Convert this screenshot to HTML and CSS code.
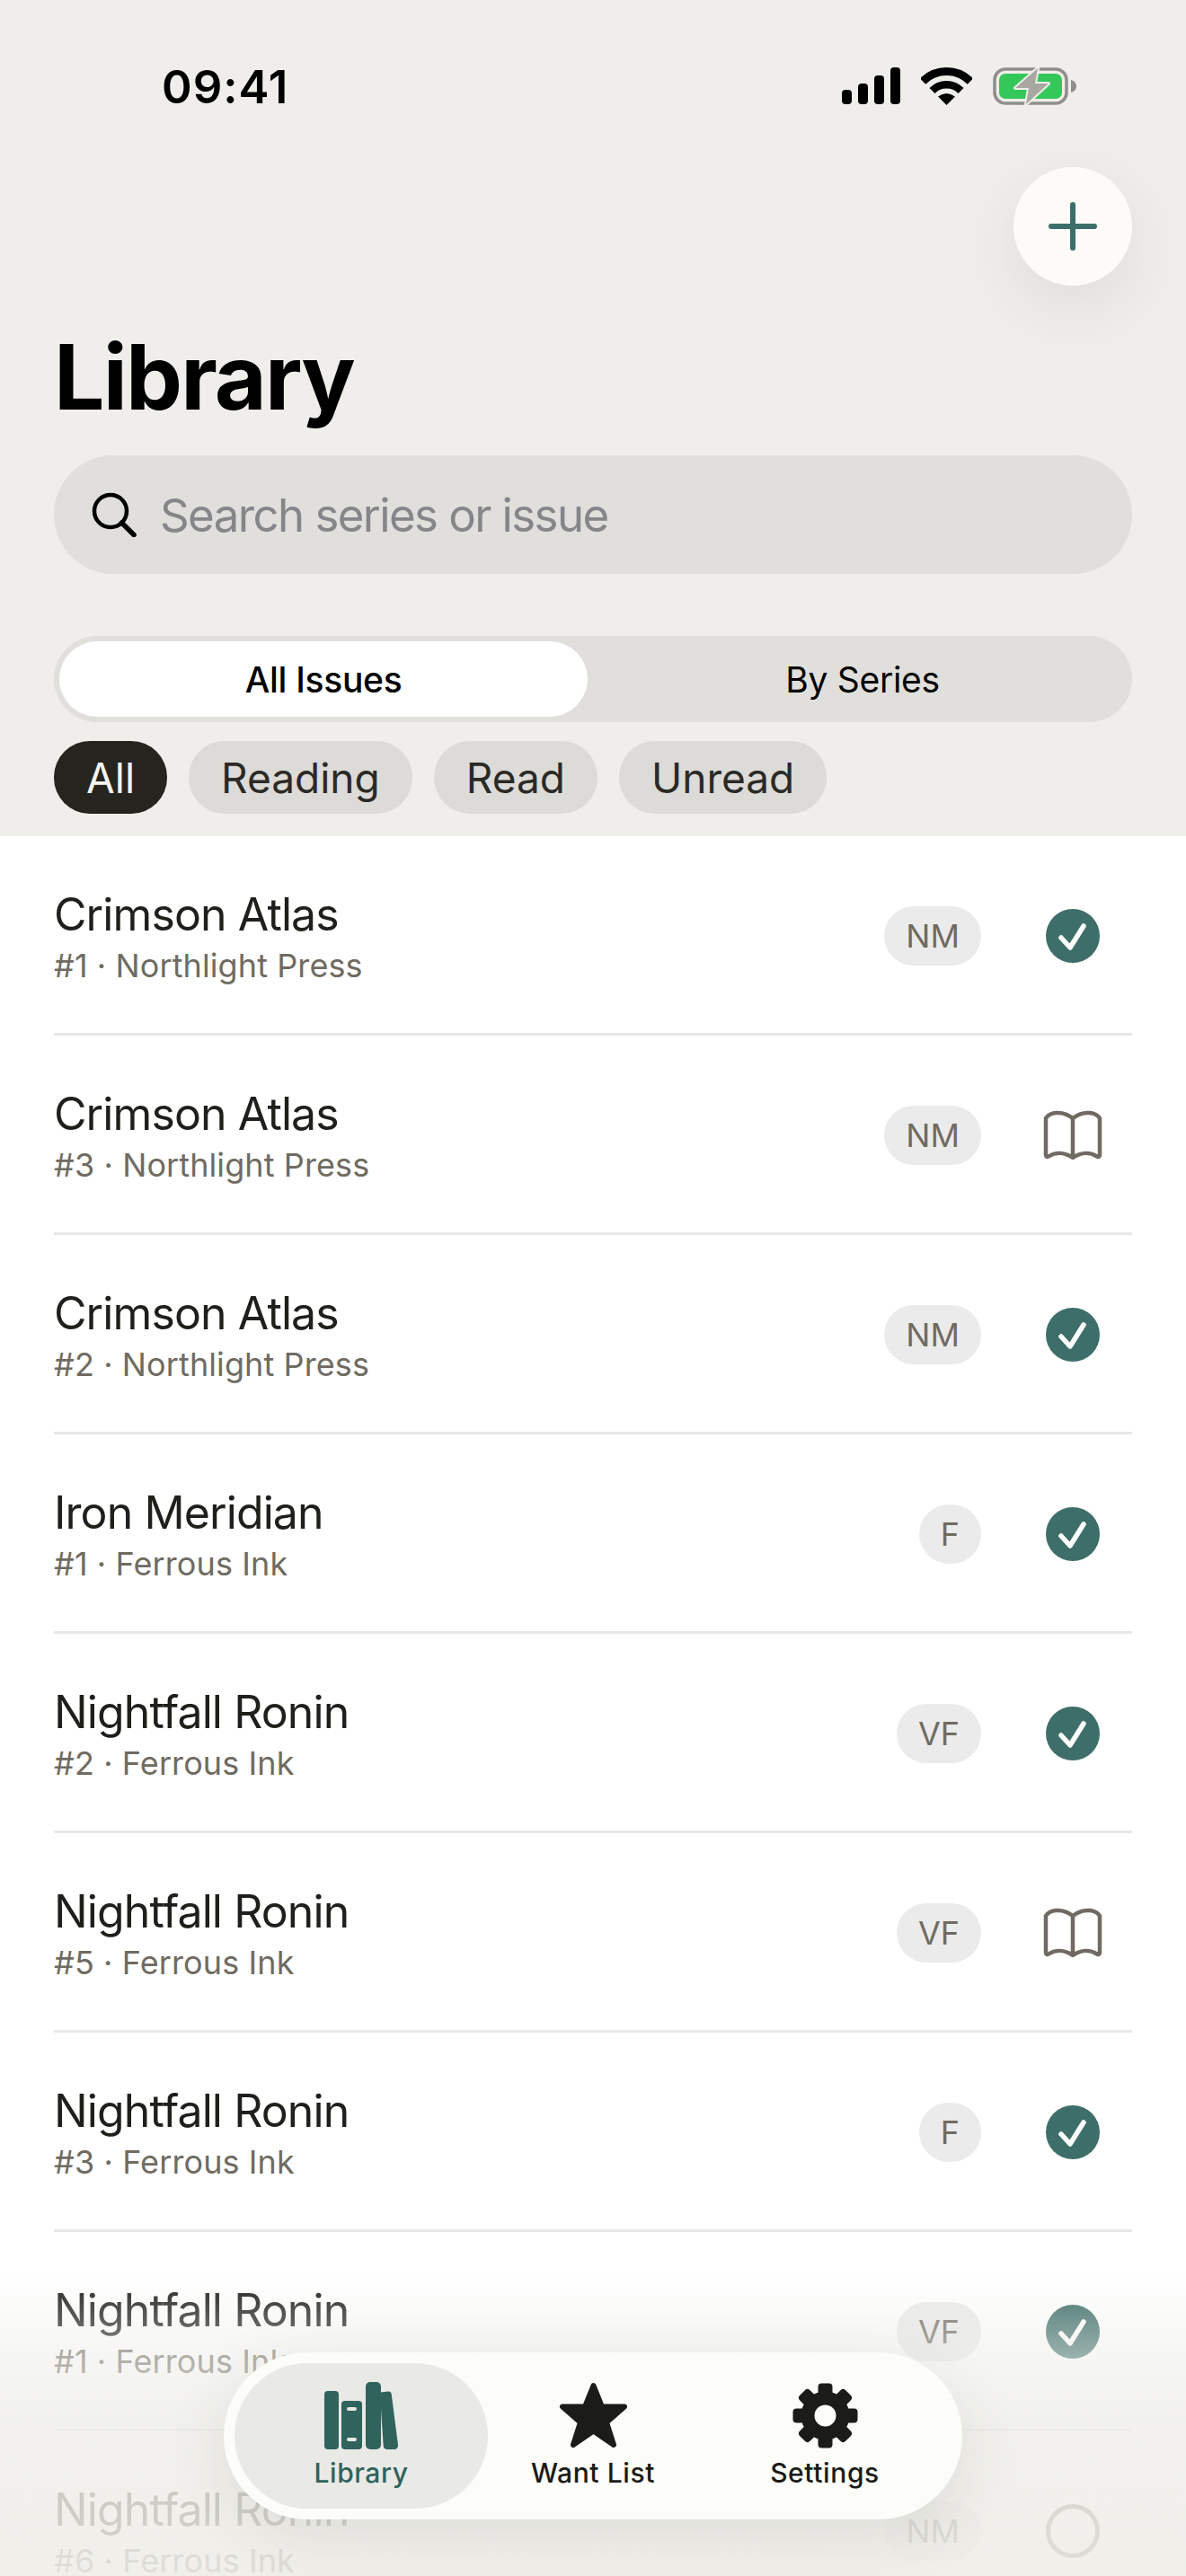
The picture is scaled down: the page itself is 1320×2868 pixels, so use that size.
FILE: index.html
```html
<!DOCTYPE html>
<html lang="en">
<head>
    <meta charset="UTF-8">
    <meta name="viewport" content="width=device-width, initial-scale=1.0">
    <title>Library</title>
    <link rel="stylesheet" href="styles.css">
</head>
<body>

<svg class="defs" width="0" height="0">
    <symbol id="icon-check" viewBox="0 0 60 60">
        <circle cx="30" cy="30" r="30" fill="#3d6e6a"/>
        <path d="M17 32 L27 43 L42 19" fill="none" stroke="#fff" stroke-width="5.5" stroke-linecap="round" stroke-linejoin="round"/>
    </symbol>
    <symbol id="icon-book" viewBox="0 0 66 56">
        <path d="M33 9 C27 4 20 2.5 14 3 C9 3.5 5 6 3 9 V50 C3 52 4.500 52.500 6 51.500 C13 47 23 46 33 53 C43 46 53 47 60 51.500 C61.500 52.500 63 52 63 50 V9 C61 6 57 3.500 52 3 C46 2.500 39 4 33 9 Z M33 9 V52" fill="none" stroke="#6f6b62" stroke-width="4.500" stroke-linejoin="round"/>
    </symbol>
    <symbol id="icon-empty" viewBox="0 0 60 60">
        <circle cx="30" cy="30" r="27.500" fill="none" stroke="#6f6b62" stroke-width="5"/>
    </symbol>
</svg>

<div class="screen">
    <div class="header">
        <div class="status-bar">
            <span class="time">09:41</span>
            <div class="status-icons">
                <svg width="65" height="42" viewBox="0 0 65 42">
                    <rect x="0" y="25" width="11" height="16" rx="4"/>
                    <rect x="18" y="18" width="11" height="23" rx="4"/>
                    <rect x="36" y="9" width="11" height="32" rx="4"/>
                    <rect x="54" y="0" width="11" height="41" rx="4"/>
                </svg>
                <svg width="57" height="42" viewBox="0 0 57 42">
                    <path d="M2 15.500 A37.500 37.500 0 0 1 55 15.500" fill="none" stroke="#000" stroke-width="9"/>
                    <path d="M12.500 26 A22.500 22.500 0 0 1 44.500 26" fill="none" stroke="#000" stroke-width="8.500"/>
                    <path d="M28.500 42 L19 32.500 Q28.500 25.500 38 32.500 Z"/>
                </svg>
                <svg width="93" height="42" viewBox="0 0 93 42">
                    <rect x="2" y="2" width="80" height="38" rx="12" fill="none" stroke="#8f8e8a" stroke-width="3.500"/>
                    <rect x="7" y="7" width="70" height="28" rx="7" fill="#34c759"/>
                    <path d="M87 14 C91 15 93 18 93 21 C93 24 91 27 87 28 Z" fill="#8f8e8a"/>
                    <path d="M50 1 L25 23 L40 23 L37 41 L62 18 L47 18 Z" fill="#a8a7a2" stroke="#efeeea" stroke-width="4" stroke-linejoin="round" paint-order="stroke"/>
                </svg>
            </div>
        </div>

        <div class="fab-row">
            <button class="fab">
                <svg width="54" height="54" viewBox="0 0 54 54">
                    <path d="M27 3 V51 M3 27 H51" fill="none" stroke="#3d6e6a" stroke-width="6" stroke-linecap="round"/>
                </svg>
            </button>
        </div>

        <h1 class="page-title">Library</h1>

        <div class="search">
            <svg width="50" height="50" viewBox="0 0 50 50">
                <circle cx="21" cy="21" r="18" fill="none" stroke="#000" stroke-width="4.500"/>
                <path d="M33.500 34 L47 47.500" fill="none" stroke="#000" stroke-width="5.500" stroke-linecap="round"/>
            </svg>
            <span>Search series or issue</span>
        </div>

        <div class="segments">
            <div class="segment selected">All Issues</div>
            <div class="segment">By Series</div>
        </div>

        <div class="chips">
            <div class="chip active">All</div>
            <div class="chip">Reading</div>
            <div class="chip">Read</div>
            <div class="chip">Unread</div>
        </div>
    </div>

    <div class="list">
        <div class="row">
            <div class="row-text"><div class="row-title">Crimson Atlas</div><div class="row-sub">#1 · Northlight Press</div></div>
            <span class="badge">NM</span>
            <span class="status"><svg class="ico-check"><use href="#icon-check"/></svg></span>
        </div>
        <div class="row">
            <div class="row-text"><div class="row-title">Crimson Atlas</div><div class="row-sub">#3 · Northlight Press</div></div>
            <span class="badge">NM</span>
            <span class="status"><svg class="ico-book"><use href="#icon-book"/></svg></span>
        </div>
        <div class="row">
            <div class="row-text"><div class="row-title">Crimson Atlas</div><div class="row-sub">#2 · Northlight Press</div></div>
            <span class="badge">NM</span>
            <span class="status"><svg class="ico-check"><use href="#icon-check"/></svg></span>
        </div>
        <div class="row">
            <div class="row-text"><div class="row-title">Iron Meridian</div><div class="row-sub">#1 · Ferrous Ink</div></div>
            <span class="badge">F</span>
            <span class="status"><svg class="ico-check"><use href="#icon-check"/></svg></span>
        </div>
        <div class="row">
            <div class="row-text"><div class="row-title">Nightfall Ronin</div><div class="row-sub">#2 · Ferrous Ink</div></div>
            <span class="badge">VF</span>
            <span class="status"><svg class="ico-check"><use href="#icon-check"/></svg></span>
        </div>
        <div class="row">
            <div class="row-text"><div class="row-title">Nightfall Ronin</div><div class="row-sub">#5 · Ferrous Ink</div></div>
            <span class="badge">VF</span>
            <span class="status"><svg class="ico-book"><use href="#icon-book"/></svg></span>
        </div>
        <div class="row">
            <div class="row-text"><div class="row-title">Nightfall Ronin</div><div class="row-sub">#3 · Ferrous Ink</div></div>
            <span class="badge">F</span>
            <span class="status"><svg class="ico-check"><use href="#icon-check"/></svg></span>
        </div>
        <div class="row">
            <div class="row-text"><div class="row-title">Nightfall Ronin</div><div class="row-sub">#1 · Ferrous Ink</div></div>
            <span class="badge">VF</span>
            <span class="status"><svg class="ico-check"><use href="#icon-check"/></svg></span>
        </div>
        <div class="row">
            <div class="row-text"><div class="row-title">Nightfall Ronin</div><div class="row-sub">#6 · Ferrous Ink</div></div>
            <span class="badge">NM</span>
            <span class="status"><svg class="ico-check"><use href="#icon-empty"/></svg></span>
        </div>
    </div>

    <div class="fade"></div>

    <div class="tabbar">
        <div class="tab active">
            <svg width="82" height="75" viewBox="0 0 82 75" fill="#2f635c">
                <rect x="0" y="10" width="16" height="65" rx="4"/>
                <rect x="19" y="21" width="23" height="54" rx="4"/>
                <rect x="46" y="0" width="17" height="75" rx="5"/>
                <path d="M63 11.500 L71 10.500 C73 10.300 74.500 11.500 74.700 13.500 L82 70 C82.300 73 80.500 74.800 78 75 L70 75 C67.500 75 66 73.500 65.700 71 L63 30 Z"/>
                <rect x="25" y="28" width="11" height="4" rx="2" fill="#e9e9e5"/>
                <rect x="25" y="62" width="11" height="4" rx="2" fill="#e9e9e5"/>
            </svg>
            <span>Library</span>
        </div>
        <div class="tab">
            <svg width="77" height="75" viewBox="0 0 77 75">
                <path d="M38.500 4 L48 27.500 L73 27.500 L53 45 L61 70 L38.500 54.500 L16 70 L24 45 L4 27.500 L29 27.500 Z" fill="#1b1b17" stroke="#1b1b17" stroke-width="6" stroke-linejoin="round"/>
            </svg>
            <span>Want List</span>
        </div>
        <div class="tab">
            <svg width="75" height="75" viewBox="-37.500 -37.500 75 75" fill="#1b1b17">
                <circle r="27"/>
                <rect x="-8" y="-36" width="16" height="16" rx="4"/>
                <rect x="-8" y="-36" width="16" height="16" rx="4" transform="rotate(45)"/>
                <rect x="-8" y="-36" width="16" height="16" rx="4" transform="rotate(90)"/>
                <rect x="-8" y="-36" width="16" height="16" rx="4" transform="rotate(135)"/>
                <rect x="-8" y="-36" width="16" height="16" rx="4" transform="rotate(180)"/>
                <rect x="-8" y="-36" width="16" height="16" rx="4" transform="rotate(225)"/>
                <rect x="-8" y="-36" width="16" height="16" rx="4" transform="rotate(270)"/>
                <rect x="-8" y="-36" width="16" height="16" rx="4" transform="rotate(315)"/>
                <circle r="12" fill="#fcfcf8"/>
            </svg>
            <span>Settings</span>
        </div>
    </div>
</div>

</body>
</html>
```

FILE: styles.css
```css
body {
    font-family: Inter, "Noto Sans", sans-serif;
    margin: 0;
    padding: 0;
    background-color: #fff;
}
.defs {
    position: absolute;
}
.screen {
    position: relative;
    width: 1320px;
    height: 2868px;
    overflow: hidden;
    background-color: #fff;
}

/* top area */
.header {
    background-color: #efeeea;
    height: 931px;
    padding: 0 60px;
    box-sizing: border-box;
}
.status-bar {
    display: flex;
    justify-content: space-between;
    margin: 0 62px 0 120px;
    padding-top: 75px;
    height: 186px;
    box-sizing: border-box;
}
.time {
    font-size: 51px;
    font-weight: 600;
    letter-spacing: 1px;
    line-height: 44px;
    color: #000;
}
.status-icons {
    display: flex;
    gap: 23px;
    height: 42px;
}
.fab-row {
    display: flex;
    justify-content: flex-end;
    height: 132px;
}
.fab {
    display: flex;
    align-items: center;
    justify-content: center;
    width: 132px;
    height: 132px;
    padding: 0;
    border: none;
    border-radius: 50%;
    background-color: #fcfbf7;
    box-shadow: 0 24px 72px rgba(60, 60, 50, 0.09);
}
.page-title {
    margin: 42px 0 27px;
    font-size: 100px;
    font-weight: 700;
    letter-spacing: -1.8px;
    line-height: 120px;
    color: #000;
}
.search {
    display: flex;
    align-items: center;
    gap: 26px;
    height: 132px;
    padding-left: 42px;
    border-radius: 66px;
    background-color: #e0dfdb;
    font-size: 51px;
    letter-spacing: -1.6px;
    color: #85858a;
}
.segments {
    display: flex;
    gap: 6px;
    height: 96px;
    margin-top: 69px;
    padding: 6px 0 6px 6px;
    box-sizing: border-box;
    border-radius: 48px;
    background-color: #e0dfdb;
}
.segment {
    flex: 1;
    display: flex;
    align-items: center;
    justify-content: center;
    border-radius: 42px;
    font-size: 39px;
    letter-spacing: -0.3px;
    color: #000;
}
.segment.selected {
    flex: 0 0 588px;
    background-color: #fff;
    font-weight: 500;
}
.chips {
    display: flex;
    gap: 24px;
    margin-top: 21px;
}
.chip {
    display: flex;
    align-items: center;
    height: 81px;
    padding: 0 36px;
    border-radius: 40px;
    background-color: #dcdbd7;
    font-size: 46px;
    color: #2b2a26;
}
.chip.active {
    background-color: #25241f;
    color: #f5f4ef;
}

/* list */
.list {
    padding: 0 60px;
}
.row {
    display: flex;
    align-items: center;
    height: 222px;
    padding: 3px 36px 0 0;
    box-sizing: border-box;
    border-bottom: 3px solid #e8e8e8;
}
.row-text {
    flex: 1;
    padding-top: 3px;
}
.row-title {
    font-size: 50px;
    letter-spacing: -0.9px;
    line-height: 60px;
    color: #1f1f1b;
}
.row-sub {
    margin-top: 3px;
    font-size: 36px;
    letter-spacing: 0.1px;
    line-height: 48px;
    color: #6f6b62;
}
.badge {
    min-width: 66px;
    height: 66px;
    padding: 0 24px;
    box-sizing: border-box;
    border-radius: 33px;
    background-color: #ebebeb;
    font-size: 36px;
    line-height: 66px;
    text-align: center;
    color: #6f6b62;
}
.status {
    display: flex;
    justify-content: center;
    width: 60px;
    margin-left: 72px;
}
.ico-check {
    flex-shrink: 0;
    width: 60px;
    height: 60px;
}
.ico-book {
    flex-shrink: 0;
    width: 66px;
    height: 56px;
}

/* bottom */
.fade {
    position: absolute;
    left: 0;
    right: 0;
    bottom: 0;
    height: 340px;
    pointer-events: none;
    background: linear-gradient(to bottom,
        rgba(238, 237, 232, 0) 0%,
        rgba(238, 237, 232, 0.5) 27%,
        rgba(238, 237, 232, 0.8) 52%,
        rgba(238, 237, 232, 0.88) 100%);
}
.tabbar {
    position: absolute;
    left: 249px;
    top: 2619px;
    display: grid;
    grid-template-columns: 282px 234px 282px;
    width: 822px;
    height: 186px;
    padding: 12px;
    box-sizing: border-box;
    border-radius: 93px;
    background-color: #fcfcf8;
    box-shadow: 0 18px 70px rgba(60, 60, 50, 0.1);
}
.tab {
    display: flex;
    flex-direction: column;
    align-items: center;
    padding-top: 21px;
    border-radius: 81px;
    font-size: 30px;
    font-weight: 500;
    letter-spacing: 0.6px;
    line-height: 36px;
    color: #1b1b17;
}
.tab span {
    margin-top: 8px;
}
.tab.active {
    background-color: #e9e9e5;
    color: #2f635c;
}
```
